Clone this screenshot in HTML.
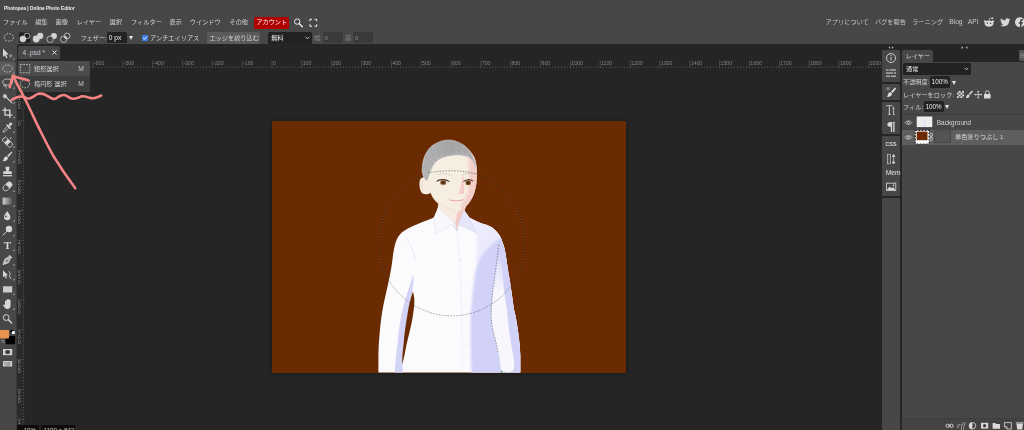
<!DOCTYPE html>
<html lang="ja">
<head>
<meta charset="utf-8">
<title>Photopea | Online Photo Editor</title>
<style>
*{box-sizing:border-box;margin:0;padding:0}
html,body{width:1024px;height:430px;overflow:hidden;background:#252525}
body{position:relative;font-family:"Liberation Sans","Noto Sans CJK JP",sans-serif;font-size:6.2px;color:#d4d4d4;line-height:1}
.a{position:absolute}
.t{position:absolute;white-space:nowrap;line-height:8px;height:8px}
.top{left:0;top:0;width:1024px;height:44.4px;background:#474747}
.dk{background:#222;border-radius:1.5px}
.btn{background:#5a5a5a;border-radius:1.5px}
svg{position:absolute;overflow:visible}
</style>
</head>
<body>
<div id="app" style="position:absolute;left:0;top:0;width:1024px;height:430px;will-change:transform">
<!-- ===== top bars ===== -->
<div class="a top"></div>
<div class="a" style="left:0;top:44.4px;width:20px;height:4px;background:#474747"></div><div class="a" style="left:16.8px;top:44.4px;width:6px;height:6px;background:#252525;border-radius:2px 0 0 0"></div>
<div class="t" id="title" style="left:3.7px;top:4.1px;font-size:6.2px;font-weight:bold;color:#f2f2f2;transform-origin:0 50%;transform:scaleX(.775)">Photopea | Online Photo Editor</div>

<!-- menu -->
<div class="t" style="left:3px;top:17.8px">ファイル</div>
<div class="t" style="left:35.3px;top:17.8px">編集</div>
<div class="t" style="left:55.5px;top:17.8px">画像</div>
<div class="t" style="left:76.5px;top:17.8px">レイヤー</div>
<div class="t" style="left:109.5px;top:17.8px">選択</div>
<div class="t" style="left:131px;top:17.8px">フィルター</div>
<div class="t" style="left:169.6px;top:17.8px">表示</div>
<div class="t" style="left:189.8px;top:17.8px">ウインドウ</div>
<div class="t" style="left:229.5px;top:17.8px">その他</div>
<div class="a" style="left:253.6px;top:16.5px;width:35.6px;height:12.3px;background:#b00000;border-radius:1.6px"></div>
<div class="t" style="left:256.3px;top:17.8px;color:#fff">アカウント</div>

<!-- right menu -->
<div class="t" style="left:825.6px;top:17.8px;color:#c4c4c4">アプリについて</div>
<div class="t" style="left:875px;top:17.8px;color:#c4c4c4">バグを報告</div>
<div class="t" style="left:912.2px;top:17.8px;color:#c4c4c4">ラーニング</div>
<div class="t" style="left:949.2px;top:17.8px;color:#c8c8c8;font-size:6.7px">Blog</div>
<div class="t" style="left:968px;top:17.8px;color:#c8c8c8;font-size:6.4px">API</div>

<!-- options bar -->
<svg class="a" style="left:0;top:30px" width="80" height="14" viewBox="0 30 80 14">
 <ellipse cx="8.8" cy="37.4" rx="4.6" ry="3.8" fill="none" stroke="#d8d8d8" stroke-width=".8" stroke-dasharray="1.7 1.1"/>
 <rect x="19.1" y="32.2" width="11.2" height="10.6" rx="1.2" fill="#222"/>
 <circle cx="27" cy="35.9" r="2.9" fill="none" stroke="#d8d8d8" stroke-width=".7"/>
 <circle cx="22.9" cy="39" r="3.2" fill="#d2d2d2"/>
 <circle cx="40.2" cy="35.9" r="3.1" fill="#d2d2d2"/>
 <circle cx="36.2" cy="39" r="3.4" fill="#d2d2d2"/>
 <path d="M37 35.6 L40 38.8" stroke="#d2d2d2" stroke-width="3"/>
 <circle cx="53.9" cy="35.9" r="3" fill="#d2d2d2"/>
 <circle cx="50.1" cy="39.3" r="3.2" fill="#474747" stroke="#d8d8d8" stroke-width=".7"/>
 <circle cx="67.1" cy="35.9" r="2.9" fill="none" stroke="#d8d8d8" stroke-width=".7"/>
 <circle cx="63.7" cy="39.3" r="3.2" fill="none" stroke="#d8d8d8" stroke-width=".7"/>
 <path d="M64.4 36.4 L66.8 38.6" fill="none" stroke="#d8d8d8" stroke-width="1.8"/>
</svg>
<div class="t" style="left:80.4px;top:33.6px">フェザー:</div>
<div class="a dk" style="left:107.4px;top:31.6px;width:19.6px;height:11.8px"></div>
<div class="t" style="left:108.8px;top:33.6px;color:#eee;font-size:6.6px">0 px</div>
<div class="a" style="left:128.8px;top:35.5px;width:0;height:0;border-left:2.3px solid transparent;border-right:2.3px solid transparent;border-top:4.2px solid #e6e6e6"></div>
<div class="a" style="left:142px;top:34.8px;width:6px;height:6px;background:#3b7de9;border-radius:1px"></div>
<svg class="a" style="left:142px;top:34.8px" width="6" height="6" viewBox="0 0 6 6"><path d="M1.2 3.1 L2.5 4.4 L4.9 1.5" fill="none" stroke="#fff" stroke-width=".9"/></svg>
<div class="t" style="left:150px;top:33.6px">アンチエイリアス</div>
<div class="a btn" style="left:207px;top:31.6px;width:53.4px;height:12px"></div>
<div class="t" style="left:209.4px;top:33.6px">エッジを絞り込む</div>
<div class="a dk" style="left:268.3px;top:31.6px;width:43.3px;height:12px"></div>
<div class="t" style="left:271.2px;top:33.6px;color:#eee">無料</div>
<svg class="a" style="left:305px;top:35.5px" width="5" height="4" viewBox="0 0 5 4"><path d="M.6 .8 L2.4 2.8 L4.2 .8" fill="none" stroke="#e0e0e0" stroke-width=".8"/></svg>
<div class="t" style="left:314px;top:33.6px;color:#8a8a8a">幅:</div>
<div class="a" style="left:322.5px;top:31.6px;width:20px;height:11.6px;background:#3a3a3a;border-radius:1.5px"></div>
<div class="t" style="left:324.4px;top:33.6px;color:#8a8a8a">0</div>
<div class="t" style="left:345px;top:33.6px;color:#8a8a8a">高:</div>
<div class="a" style="left:353.4px;top:31.6px;width:20px;height:11.6px;background:#3a3a3a;border-radius:1.5px"></div>
<div class="t" style="left:355px;top:33.6px;color:#8a8a8a">0</div>

<!-- ===== left toolbar ===== -->
<div class="a" style="left:0;top:44px;width:16.8px;height:386px;background:#474747"></div>
<!-- TOOLS START -->
<svg class="a" style="left:0;top:0" width="17" height="430" viewBox="0 0 17 430" fill="none" stroke="none">
<path d="M0 61.63 H13.6 a1.6 1.6 0 0 1 1.6 1.6 V73.73 a1.6 1.6 0 0 1 -1.6 1.6 H0Z" fill="#5b5b5b"/>
<g transform="translate(0 53.80)"><path d="M3 -5.2 L3 3.2 L4.9 1.5 L6.3 4.5 L7.5 3.9 L6.1 1 L8.6 .8Z" fill="#d6d6d6"/><path d="M10.7 .6 V3.6 M9.2 2.1 H12.2" stroke="#b8b8b8" stroke-width=".7"/><path d="M10.7 -.1 L11.4 .8 H10Z M10.7 4.3 L11.4 3.4 H10Z M8.5 2.1 L9.4 1.4 V2.8Z M12.9 2.1 L12 1.4 V2.8Z" fill="#b8b8b8"/><path d="M14.6 3.6 L14.6 5.6 L12.6 5.6Z" fill="#a4a4a4"/></g>
<g transform="translate(0 68.53)"><ellipse cx="7.5" cy="0" rx="4.9" ry="3.5" stroke="#d6d6d6" stroke-width=".8" stroke-dasharray="1.7 1.1"/><path d="M14.6 3.6 L14.6 5.6 L12.6 5.6Z" fill="#a4a4a4"/></g>
<g transform="translate(0 83.26)"><ellipse cx="7.6" cy="-1.2" rx="4.9" ry="3" stroke="#d6d6d6" stroke-width=".8"/><path d="M4.6 1.2 C3.4 1.4 3.6 3.4 5 3.1 C6.4 2.7 5.4 .9 4.6 1.2 M5.4 2.9 C6.2 3.6 6.6 4.4 6.4 5.4" stroke="#d6d6d6" stroke-width=".8"/><path d="M14.6 3.6 L14.6 5.6 L12.6 5.6Z" fill="#a4a4a4"/></g>
<g transform="translate(0 97.99)"><path d="M5.6 -1.4 L11.8 4.6" stroke="#d6d6d6" stroke-width="1.2" stroke-linecap="round"/><path d="M4.8 -5 L5.4 -3 L7.4 -3.6 L6.2 -2 L7.6 -.6 L5.6 -.8 L4.8 1.2 L4.2 -.8 L2.2 -.4 L3.6 -2 L2.4 -3.6 L4.2 -3Z" fill="#d6d6d6"/><path d="M14.6 3.6 L14.6 5.6 L12.6 5.6Z" fill="#a4a4a4"/></g>
<g transform="translate(0 112.72)"><path d="M5 -5.2 V2.4 H12.4 M2.4 -2.6 H9.8 V5" stroke="#d6d6d6" stroke-width="1.3"/><path d="M14.6 3.6 L14.6 5.6 L12.6 5.6Z" fill="#a4a4a4"/></g>
<g transform="translate(0 127.45)"><path d="M3.2 4.6 L3.4 3 L7.6 -1.2 L9 .2 L4.8 4.4Z" stroke="#d6d6d6" stroke-width=".8"/><path d="M7 -2.4 L10.2 .8 M8.4 -1 L10.4 -3" stroke="#d6d6d6" stroke-width="1.5" stroke-linecap="round"/><circle cx="10.6" cy="-3.4" r="1.5" fill="#d6d6d6"/><path d="M14.6 3.6 L14.6 5.6 L12.6 5.6Z" fill="#a4a4a4"/></g>
<g transform="translate(0 142.18)"><g transform="rotate(45 7.5 0)"><rect x="2" y="-2.5" width="11" height="5" rx="1.3" stroke="#d6d6d6" stroke-width=".8"/><rect x="5.6" y="-2.5" width="3.8" height="5" fill="#d6d6d6"/></g><circle cx="10.6" cy="-4" r=".7" fill="#d6d6d6"/><circle cx="4" cy="-3.4" r=".5" fill="#d6d6d6"/><path d="M14.6 3.6 L14.6 5.6 L12.6 5.6Z" fill="#a4a4a4"/></g>
<g transform="translate(0 156.91)"><path d="M11.6 -5.4 L12.4 -4.6 L8.6 .2 L7.2 -1.2Z" fill="#d6d6d6"/><path d="M6.6 -.6 L8 .8 C8 3 6 4.6 2.6 4.4 C3.8 3.4 3.4 2.4 4 1.2 C4.6 .2 5.6 -.4 6.6 -.6Z" fill="#d6d6d6"/><path d="M14.6 3.6 L14.6 5.6 L12.6 5.6Z" fill="#a4a4a4"/></g>
<g transform="translate(0 171.64)"><path d="M5.6 -5 H9.4 V-3 L8.6 -.4 H11.8 V2.4 H3.2 V-.4 H6.4 L5.6 -3Z" fill="#d6d6d6"/><rect x="3" y="3.4" width="9" height="1.3" fill="#d6d6d6"/></g>
<g transform="translate(0 186.37)"><g transform="rotate(-45 7.5 0)"><rect x="2.3" y="-2.7" width="10.4" height="5.4" rx="2.7" stroke="#d6d6d6" stroke-width=".8"/><path d="M7.5 -2.7 H10 a2.7 2.7 0 0 1 0 5.4 H7.5Z" fill="#d6d6d6"/></g><path d="M14.6 3.6 L14.6 5.6 L12.6 5.6Z" fill="#a4a4a4"/></g>
<defs><linearGradient id="gr" x1="0" x2="1" y1="0" y2="0"><stop offset="0" stop-color="#cfcfcf"/><stop offset="1" stop-color="#5a5a5a"/></linearGradient></defs>
<g transform="translate(0 201.10)"><rect x="2.6" y="-3.5" width="9.3" height="7" fill="url(#gr)"/><path d="M14.6 3.6 L14.6 5.6 L12.6 5.6Z" fill="#a4a4a4"/></g>
<g transform="translate(0 215.83)"><path d="M7.2 -4.8 C8.4 -2.6 10.4 -1 10.4 1.2 A3.2 3.2 0 0 1 4 1.2 C4 -1 6 -2.6 7.2 -4.8Z" fill="#d6d6d6"/><circle cx="6" cy=".6" r=".9" fill="#474747"/><path d="M14.6 3.6 L14.6 5.6 L12.6 5.6Z" fill="#a4a4a4"/></g>
<g transform="translate(0 230.56)"><circle cx="9" cy="-1.6" r="3.2" fill="#d6d6d6"/><path d="M6.8 .8 L3 4.6" stroke="#d6d6d6" stroke-width="1" stroke-linecap="round"/><path d="M14.6 3.6 L14.6 5.6 L12.6 5.6Z" fill="#a4a4a4"/></g>
<g transform="translate(0 245.29)"><text x="7.5" y="3.9" font-family="Liberation Serif, serif" font-size="11.2" font-weight="bold" text-anchor="middle" fill="#d6d6d6">T</text><path d="M14.6 3.6 L14.6 5.6 L12.6 5.6Z" fill="#a4a4a4"/></g>
<g transform="translate(0 260.02)"><path d="M9.4 -5.2 L12.4 -2.2 L10.6 -1.2 L8.4 -3.4Z" fill="#d6d6d6"/><path d="M8 -3 L10.2 -.8 L8.4 2.8 L3 4.6 L4.8 -.8Z M3.4 4.2 L6.6 1" stroke="#d6d6d6" stroke-width=".8" fill="#d6d6d6" fill-opacity=".75"/><circle cx="6.9" cy=".7" r=".8" fill="#474747"/><path d="M14.6 3.6 L14.6 5.6 L12.6 5.6Z" fill="#a4a4a4"/></g>
<g transform="translate(0 274.75)"><path d="M3 -4.6 L3 2.6 L4.7 1.2 L5.9 3.8 L7 3.3 L5.8 .8 L8 .6Z" fill="#d6d6d6"/><path d="M8.4 -3.4 C10.4 -2.6 10.4 0 9.4 1.6 M9.4 1.6 L11 4.4" stroke="#d6d6d6" stroke-width=".8"/><path d="M14.6 3.6 L14.6 5.6 L12.6 5.6Z" fill="#a4a4a4"/></g>
<g transform="translate(0 289.48)"><rect x="3" y="-3.2" width="9.2" height="6.2" fill="#cdcdcd"/><path d="M14.6 3.6 L14.6 5.6 L12.6 5.6Z" fill="#a4a4a4"/></g>
<g transform="translate(0 304.21)"><path d="M5 1 V-3 a.7 .7 0 0 1 1.4 0 V-4.2 a.7 .7 0 0 1 1.4 0 V-4.6 a.7 .7 0 0 1 1.4 0 V-3.8 a.7 .7 0 0 1 1.4 0 V1.4 C10.6 3.4 9.6 4.8 7.6 4.8 C5.8 4.8 5 3.8 3.2 1.2 C2.8 .4 3.8 -.2 4.4 .6Z" fill="#d6d6d6"/><path d="M14.6 3.6 L14.6 5.6 L12.6 5.6Z" fill="#a4a4a4"/></g>
<g transform="translate(0 318.94)"><circle cx="6.2" cy="-1.4" r="2.9" stroke="#d6d6d6" stroke-width="1"/><path d="M8.4 .8 L11.6 4" stroke="#d6d6d6" stroke-width="1.5" stroke-linecap="round"/></g>
<rect x="5.6" y="336" width="9.6" height="8.2" rx=".6" fill="#000"/>
<rect x="0" y="329.9" width="9" height="8.7" rx=".8" fill="#e8944f"/>
<rect x="10.6" y="329.8" width="2.6" height="2.6" fill="#000"/><rect x="12" y="331.2" width="2.8" height="2.8" fill="#fff"/>
<path d="M1.2 340.6 H3.6 V343 M1.2 340.6 l.9 -.8 M1.2 340.6 l.9 .8 M3.6 343 l-.8 -.9 M3.6 343 l.8 -.9" stroke="#bbb" stroke-width=".5"/>
<rect x="3" y="349" width="9.2" height="6.2" fill="#d0d0d0"/><ellipse cx="7.6" cy="352.1" rx="2.5" ry="2" fill="#3a3a3a"/>
<rect x="3" y="361" width="9.2" height="5.4" rx=".6" fill="#d0d0d0"/><path d="M4.2 362.5 H11 M4.2 363.8 H11" stroke="#474747" stroke-width=".6" stroke-dasharray=".8 .5"/><path d="M5.4 365.1 H9.8" stroke="#474747" stroke-width=".6"/>
</svg>
<!-- TOOLS END -->
<!-- rulers -->
<svg class="a" style="left:0;top:0" width="1024" height="430" viewBox="0 0 1024 430" font-family="Liberation Sans, sans-serif" font-size="5.2" fill="#858585">
<rect x="16.6" y="59.4" width="7.2" height="370.6" fill="#2a2a2a"/>
<line x1="24.4" y1="67.2" x2="881.3" y2="67.2" stroke="#6a6a6a" stroke-width="1" stroke-dasharray="0.8 2.184" stroke-dashoffset="-2.512"/>
<line x1="33.3" y1="60.5" x2="33.3" y2="67.8" stroke="#505050" stroke-width=".8"/><text x="34.2" y="65.1">-800</text>
<line x1="63.1" y1="60.5" x2="63.1" y2="67.8" stroke="#505050" stroke-width=".8"/><text x="64.0" y="65.1">-700</text>
<line x1="93.0" y1="60.5" x2="93.0" y2="67.8" stroke="#505050" stroke-width=".8"/><text x="93.9" y="65.1">-600</text>
<line x1="122.8" y1="60.5" x2="122.8" y2="67.8" stroke="#505050" stroke-width=".8"/><text x="123.7" y="65.1">-500</text>
<line x1="152.6" y1="60.5" x2="152.6" y2="67.8" stroke="#505050" stroke-width=".8"/><text x="153.5" y="65.1">-400</text>
<line x1="182.5" y1="60.5" x2="182.5" y2="67.8" stroke="#505050" stroke-width=".8"/><text x="183.4" y="65.1">-300</text>
<line x1="212.3" y1="60.5" x2="212.3" y2="67.8" stroke="#505050" stroke-width=".8"/><text x="213.2" y="65.1">-200</text>
<line x1="242.2" y1="60.5" x2="242.2" y2="67.8" stroke="#505050" stroke-width=".8"/><text x="243.1" y="65.1">-100</text>
<line x1="272.0" y1="60.5" x2="272.0" y2="67.8" stroke="#505050" stroke-width=".8"/><text x="272.9" y="65.1">0</text>
<line x1="301.8" y1="60.5" x2="301.8" y2="67.8" stroke="#505050" stroke-width=".8"/><text x="302.7" y="65.1">100</text>
<line x1="331.7" y1="60.5" x2="331.7" y2="67.8" stroke="#505050" stroke-width=".8"/><text x="332.6" y="65.1">200</text>
<line x1="361.5" y1="60.5" x2="361.5" y2="67.8" stroke="#505050" stroke-width=".8"/><text x="362.4" y="65.1">300</text>
<line x1="391.4" y1="60.5" x2="391.4" y2="67.8" stroke="#505050" stroke-width=".8"/><text x="392.3" y="65.1">400</text>
<line x1="421.2" y1="60.5" x2="421.2" y2="67.8" stroke="#505050" stroke-width=".8"/><text x="422.1" y="65.1">500</text>
<line x1="451.0" y1="60.5" x2="451.0" y2="67.8" stroke="#505050" stroke-width=".8"/><text x="451.9" y="65.1">600</text>
<line x1="480.9" y1="60.5" x2="480.9" y2="67.8" stroke="#505050" stroke-width=".8"/><text x="481.8" y="65.1">700</text>
<line x1="510.7" y1="60.5" x2="510.7" y2="67.8" stroke="#505050" stroke-width=".8"/><text x="511.6" y="65.1">800</text>
<line x1="540.6" y1="60.5" x2="540.6" y2="67.8" stroke="#505050" stroke-width=".8"/><text x="541.5" y="65.1">900</text>
<line x1="570.4" y1="60.5" x2="570.4" y2="67.8" stroke="#505050" stroke-width=".8"/><text x="571.3" y="65.1">1000</text>
<line x1="600.2" y1="60.5" x2="600.2" y2="67.8" stroke="#505050" stroke-width=".8"/><text x="601.1" y="65.1">1100</text>
<line x1="630.1" y1="60.5" x2="630.1" y2="67.8" stroke="#505050" stroke-width=".8"/><text x="631.0" y="65.1">1200</text>
<line x1="659.9" y1="60.5" x2="659.9" y2="67.8" stroke="#505050" stroke-width=".8"/><text x="660.8" y="65.1">1300</text>
<line x1="689.8" y1="60.5" x2="689.8" y2="67.8" stroke="#505050" stroke-width=".8"/><text x="690.7" y="65.1">1400</text>
<line x1="719.6" y1="60.5" x2="719.6" y2="67.8" stroke="#505050" stroke-width=".8"/><text x="720.5" y="65.1">1500</text>
<line x1="749.4" y1="60.5" x2="749.4" y2="67.8" stroke="#505050" stroke-width=".8"/><text x="750.3" y="65.1">1600</text>
<line x1="779.3" y1="60.5" x2="779.3" y2="67.8" stroke="#505050" stroke-width=".8"/><text x="780.2" y="65.1">1700</text>
<line x1="809.1" y1="60.5" x2="809.1" y2="67.8" stroke="#505050" stroke-width=".8"/><text x="810.0" y="65.1">1800</text>
<line x1="839.0" y1="60.5" x2="839.0" y2="67.8" stroke="#505050" stroke-width=".8"/><text x="839.9" y="65.1">1900</text>
<line x1="868.8" y1="60.5" x2="868.8" y2="67.8" stroke="#505050" stroke-width=".8"/><text x="869.7" y="65.1">2000</text>
<line x1="23.7" y1="67.8" x2="23.7" y2="430" stroke="#6a6a6a" stroke-width="1" stroke-dasharray="0.8 2.184" stroke-dashoffset="-2.072"/>
<line x1="17" y1="91.2" x2="24.2" y2="91.2" stroke="#505050" stroke-width=".8"/><text x="19.3" y="95.8" text-anchor="middle">-</text><text x="19.3" y="100.3" text-anchor="middle">1</text><text x="19.3" y="104.8" text-anchor="middle">0</text><text x="19.3" y="109.3" text-anchor="middle">0</text>
<line x1="17" y1="121.0" x2="24.2" y2="121.0" stroke="#505050" stroke-width=".8"/><text x="19.3" y="125.6" text-anchor="middle">0</text>
<line x1="17" y1="150.8" x2="24.2" y2="150.8" stroke="#505050" stroke-width=".8"/><text x="19.3" y="155.4" text-anchor="middle">1</text><text x="19.3" y="159.9" text-anchor="middle">0</text><text x="19.3" y="164.4" text-anchor="middle">0</text>
<line x1="17" y1="180.7" x2="24.2" y2="180.7" stroke="#505050" stroke-width=".8"/><text x="19.3" y="185.3" text-anchor="middle">2</text><text x="19.3" y="189.8" text-anchor="middle">0</text><text x="19.3" y="194.3" text-anchor="middle">0</text>
<line x1="17" y1="210.5" x2="24.2" y2="210.5" stroke="#505050" stroke-width=".8"/><text x="19.3" y="215.1" text-anchor="middle">3</text><text x="19.3" y="219.6" text-anchor="middle">0</text><text x="19.3" y="224.1" text-anchor="middle">0</text>
<line x1="17" y1="240.4" x2="24.2" y2="240.4" stroke="#505050" stroke-width=".8"/><text x="19.3" y="245.0" text-anchor="middle">4</text><text x="19.3" y="249.5" text-anchor="middle">0</text><text x="19.3" y="254.0" text-anchor="middle">0</text>
<line x1="17" y1="270.2" x2="24.2" y2="270.2" stroke="#505050" stroke-width=".8"/><text x="19.3" y="274.8" text-anchor="middle">5</text><text x="19.3" y="279.3" text-anchor="middle">0</text><text x="19.3" y="283.8" text-anchor="middle">0</text>
<line x1="17" y1="300.0" x2="24.2" y2="300.0" stroke="#505050" stroke-width=".8"/><text x="19.3" y="304.6" text-anchor="middle">6</text><text x="19.3" y="309.1" text-anchor="middle">0</text><text x="19.3" y="313.6" text-anchor="middle">0</text>
<line x1="17" y1="329.9" x2="24.2" y2="329.9" stroke="#505050" stroke-width=".8"/><text x="19.3" y="334.5" text-anchor="middle">7</text><text x="19.3" y="339.0" text-anchor="middle">0</text><text x="19.3" y="343.5" text-anchor="middle">0</text>
<line x1="17" y1="359.7" x2="24.2" y2="359.7" stroke="#505050" stroke-width=".8"/><text x="19.3" y="364.3" text-anchor="middle">8</text><text x="19.3" y="368.8" text-anchor="middle">0</text><text x="19.3" y="373.3" text-anchor="middle">0</text>
<line x1="17" y1="389.6" x2="24.2" y2="389.6" stroke="#505050" stroke-width=".8"/><text x="19.3" y="394.2" text-anchor="middle">9</text><text x="19.3" y="398.7" text-anchor="middle">0</text><text x="19.3" y="403.2" text-anchor="middle">0</text>
<line x1="17" y1="419.4" x2="24.2" y2="419.4" stroke="#505050" stroke-width=".8"/><text x="19.3" y="424.0" text-anchor="middle">1</text><text x="19.3" y="428.5" text-anchor="middle">0</text><text x="19.3" y="433.0" text-anchor="middle">0</text><text x="19.3" y="437.5" text-anchor="middle">0</text>
</svg>

<!-- tab -->
<div class="a" style="left:18px;top:46.3px;width:42px;height:12.5px;background:#474747;border-radius:1.6px"></div>
<div class="t" style="left:22.6px;top:48.5px;color:#c4ccd4;font-size:6.6px">4 .psd *</div>
<svg class="a" style="left:51.6px;top:50.2px" width="5" height="5" viewBox="0 0 5 5"><path d="M.5 .5 L4.5 4.5 M4.5 .5 L.5 4.5" stroke="#f0f0f0" stroke-width=".9" fill="none"/></svg>

<!-- FLY START -->
<div class="a" style="left:18px;top:61px;width:72.2px;height:15px;background:#4b4b4b"></div>
<div class="a" style="left:18px;top:76px;width:72.2px;height:15.6px;background:#3d3d3d"></div>
<svg class="a" style="left:18px;top:61px" width="73" height="31" viewBox="18 61 73 31" fill="none">
 <rect x="20.3" y="64.6" width="9.6" height="8.2" stroke="#d8d8d8" stroke-width=".8" stroke-dasharray="1.8 1.1"/>
 <ellipse cx="25" cy="83.8" rx="4.7" ry="4" stroke="#d8d8d8" stroke-width=".8" stroke-dasharray="1.7 1.1"/>
</svg>
<div class="t" style="left:34px;top:64.6px;color:#d4d4d4">矩形選択</div>
<div class="t" style="left:78.3px;top:64.6px;color:#c8c8c8;font-size:6.7px">M</div>
<div class="t" style="left:34px;top:79.6px;color:#d4d4d4">楕円形 選択</div>
<div class="t" style="left:78.3px;top:79.6px;color:#c8c8c8;font-size:6.7px">M</div>
<!-- annotation scribble -->
<svg class="a" style="left:0;top:0" width="1024" height="430" viewBox="0 0 1024 430" fill="none" stroke="#f48383" stroke-width="2.6" stroke-linecap="round" stroke-linejoin="round">
 <path d="M9.7 87.1 C9.8 86.7 10.1 85.8 10.4 84.7 C10.7 83.6 11.2 81.7 11.5 80.5 C11.8 79.3 12.2 78.4 12.4 77.6 C12.6 76.8 12.8 76.1 12.9 75.8"/>
 <path d="M12.9 75.8 C13.3 76.0 14.5 76.4 15.4 76.7 C16.3 77.0 17.1 77.3 18.5 77.7 C19.9 78.1 22.3 78.6 24.0 79.1 C25.7 79.6 27.8 80.3 28.6 80.5"/>
 <path d="M13.2 76.3 C13.6 77.1 14.8 79.5 15.7 81.2 C16.6 82.9 17.5 84.9 18.5 86.7 C19.5 88.5 20.6 90.4 21.6 92.3 C22.6 94.2 23.6 96.3 24.4 97.9 C25.2 99.5 25.2 99.5 26.4 101.8 C27.5 104.1 29.4 108.0 31.3 112.0 C33.2 116.0 36.0 122.1 37.9 125.9 C39.8 129.7 40.9 132.0 42.4 135.0 C43.9 138.0 45.7 141.5 47.0 144.0 C48.3 146.5 49.1 148.2 50.2 150.2 C51.3 152.2 52.0 153.6 53.4 156.0 C54.8 158.4 57.1 161.6 58.9 164.4 C60.7 167.2 62.4 170.0 64.3 172.8 C66.2 175.6 68.4 178.5 70.2 181.1 C72.0 183.7 74.4 187.0 75.2 188.2"/>
 <path d="M11.7 99.9 C12.3 99.6 13.9 98.6 15.3 98.0 C16.7 97.4 18.7 96.7 20.2 96.5 C21.7 96.3 22.9 96.7 24.1 97.0 C25.3 97.3 26.5 98.3 27.5 98.5 C28.5 98.7 28.9 98.6 30.0 98.2 C31.1 97.8 32.7 97.0 33.9 96.3 C35.1 95.6 36.2 94.5 37.3 94.1 C38.3 93.6 39.1 93.6 40.2 93.6 C41.3 93.6 42.8 93.8 44.1 94.3 C45.4 94.8 46.7 95.6 48.0 96.3 C49.3 97.0 50.9 98.1 52.0 98.5 C53.1 98.9 53.6 99.0 54.4 98.9 C55.2 98.8 55.7 98.6 56.6 98.1 C57.5 97.6 58.7 96.5 59.9 96.0 C61.1 95.5 62.7 95.0 63.8 95.0 C64.9 95.0 65.6 95.5 66.7 96.0 C67.8 96.5 69.0 97.5 70.2 98.0 C71.4 98.5 72.8 98.8 74.1 98.7 C75.4 98.7 76.7 98.1 78.0 97.7 C79.3 97.3 80.7 96.5 81.9 96.3 C83.1 96.1 84.1 96.3 85.3 96.5 C86.5 96.7 87.9 97.4 89.2 97.7 C90.5 98.0 91.8 98.3 93.1 98.2 C94.4 98.1 95.7 97.7 97.0 97.2 C98.3 96.8 100.5 95.8 101.2 95.5"/>
</svg>
<!-- FLY END -->
<!-- canvas document -->
<div class="a" id="doc" style="left:271.8px;top:121px;width:354.6px;height:251.7px;background:#6a2b03;box-shadow:0 0 3px 1px #1c1c1c"></div>

<!-- FIG START -->
<svg class="a" style="left:0;top:0" width="1024" height="430" viewBox="0 0 1024 430" fill="none">
<defs>
 <clipPath id="docclip"><rect x="271.8" y="121" width="354.6" height="251.4"/></clipPath>
 <filter id="b1" x="-10%" y="-10%" width="120%" height="120%"><feGaussianBlur stdDeviation="0.45"/></filter>
 <filter id="b2" x="-20%" y="-20%" width="140%" height="140%"><feGaussianBlur stdDeviation="1.6"/></filter>
 <filter id="b4" x="-20%" y="-20%" width="140%" height="140%"><feGaussianBlur stdDeviation="1.3"/></filter>
 <filter id="b3" x="-20%" y="-20%" width="140%" height="140%"><feGaussianBlur stdDeviation="0.9"/></filter>
 <clipPath id="bodyclip"><path id="bodyp" d="M438 207.7 L433.8 217.5 C429 219.6 425 221 421.9 222.3 C416 224.6 412 226.6 407.9 228.6 C404.4 230.4 401.6 232.4 399.5 234.9 C397.4 237.6 396.2 240.4 395.4 243.3 C394.4 246.6 393.8 249.8 393.3 253 C392.6 258 392.2 262.6 391.4 267.2 C390.4 273 389 279.6 387.7 285.8 C386.4 292 385.4 296 384.5 300 C383.2 306 382 312.6 381.2 318.6 C380.4 324.6 379.8 331 379.3 337.2 C378.8 343.6 378.4 349.6 378.4 355.8 L378.4 373 L520.3 373 L520.3 355.8 C520.2 349.6 519.6 343.4 518.8 337.2 C518 330.6 517 324.6 516 318.6 C515.2 313.6 514.2 310 514 310 C513 302 511.6 293 510.5 284.9 C509.6 279 508.6 273.6 507.7 268.2 C506.8 262 506 256 505.2 251.7 C504.6 248 503.6 244.6 502.4 241.9 C501.4 238.6 500 235.8 498.2 233.5 C496.4 231 494.4 229 491.9 227.2 C488.4 225.4 484.6 224.2 480.7 223 C477 221.6 473 219.6 469.5 217.5 L464 209.8 L456.5 222 Z"/></clipPath>
 <clipPath id="faceclip"><path d="M427.6 160 C429 150 440 143 450 143 C462 143 474 150 476.2 164 C477 170 476.9 178 476.3 184 C475.6 188.6 474.6 192 473.5 195 C471.6 199.6 469 203.4 466 206.3 C463 209 460.4 211 457.5 212 C450.6 210.6 443.6 207.6 438 203.5 C434.6 200.6 432.4 197.4 431 193.7 C429.4 188.6 428.4 184 428 178.4 Z"/></clipPath>
 <linearGradient id="wedgeg" gradientUnits="userSpaceOnUse" x1="0" y1="258" x2="0" y2="292"><stop offset="0" stop-color="#f8f7fc" stop-opacity=".25"/><stop offset="1" stop-color="#f8f7fc" stop-opacity="1"/></linearGradient>
 <linearGradient id="hairg" x1="0" y1="0" x2="1" y2="0"><stop offset="0" stop-color="#b4b4b4"/><stop offset=".5" stop-color="#a6a6a6"/><stop offset="1" stop-color="#b0aeae"/></linearGradient>
</defs>
<g clip-path="url(#docclip)">
 <g filter="url(#b1)">
 <!-- neck -->
 <path d="M438.6 202 L437.4 209.4 L452.6 224.4 L456.8 231 L458.6 224.4 L464.6 210 L466.4 204 Z" fill="#f6ecdf"/>
 <path d="M457.5 211.6 L466.6 205 L464.6 210.4 L459.6 222 L456.8 231 L455.2 224 Z" fill="#f2c9c3"/>
 <!-- ear -->
 <path d="M430 178 C426 176.4 421.4 176.6 420 180 C418.8 184 419.6 189.6 421.6 192.6 C423.4 195 427 194.6 431 193 Z" fill="#f6ecdf"/>
 <path d="M422.2 180.6 C421.2 184 421.6 188 423.4 190.8" stroke="#ecd2c4" stroke-width=".7"/>
 <!-- face -->
 <path d="M427.6 160 C429 150 440 143 450 143 C462 143 474 150 476.2 164 C477 170 476.9 178 476.3 184 C475.6 188.6 474.6 192 473.5 195 C471.6 199.6 469 203.4 466 206.3 C463 209 460.4 211 457.5 212 C450.6 210.6 443.6 207.6 438 203.5 C434.6 200.6 432.4 197.4 431 193.7 C429.4 188.6 428.4 184 428 178.4 Z" fill="#f7eee2"/>
 <g clip-path="url(#faceclip)">
  <path d="M468 154 L480 158 L480 198 L466 212 L460 207 C464 201 467.6 195 468.6 187 C469.6 177 469 166 468 154Z" fill="#f4cfc8" filter="url(#b3)"/>
  <path d="M462.4 176.6 C461.6 183 460.2 189 458.8 193.6 C460.4 194.6 462.6 194.4 464 193.4 C464.6 188 464.4 182 463.6 176.6Z" fill="#f4cdc6" filter="url(#b1)"/>
  <path d="M431 193.7 C434 200 440 206 457.5 212" stroke="#efd9cb" stroke-width=".8"/>
 </g>
 <!-- eyes -->
 <path d="M436.6 181.4 C439 179.2 445.4 178.8 449.4 181.6" stroke="#4a3020" stroke-width="1.1"/>
 <ellipse cx="443.2" cy="182.8" rx="3" ry="2.5" fill="#7d4e24"/><circle cx="443.2" cy="182.8" r="1.2" fill="#3a2210"/>
 <path d="M438.4 183.6 C440.4 184.6 446 184.8 448 183.6" stroke="#e4d6cc" stroke-width=".5"/>
 <path d="M463.6 181.6 C466 179.2 470.6 179 473 181.2" stroke="#4a3020" stroke-width="1.1"/>
 <ellipse cx="468.2" cy="182.7" rx="2.7" ry="2.5" fill="#7d4e24"/><circle cx="468.2" cy="182.7" r="1.2" fill="#3a2210"/>
 <!-- brows -->
 <path d="M438.6 174.4 C442 173.2 447.4 173.4 451.4 175.2" stroke="#c9c4be" stroke-width=".7"/>
 <path d="M461.6 175.2 C464.6 173.4 469.6 173 473.6 174.2" stroke="#c9c4be" stroke-width=".7"/>
 <!-- mouth -->
 <path d="M449.2 199.8 C453 201.2 459.6 201.2 463.8 199.6" stroke="#e9a3a0" stroke-width="1"/>
 <!-- hair -->
 <path d="M423.3 176.1 C422 172 421.8 170 422.3 167.7 C422.4 164 423 161 424 157.9 C425.4 154 427.2 151 429.5 148.2 C432 145.6 434.8 143.8 437.9 142.6 C441 141 444.4 140.1 447.7 140.1 C451 139.8 454.4 140.6 457.5 141.9 C460.6 143 463.4 144.6 465.8 146.8 C468 148.8 469.9 151.1 471.4 153.7 C473 156.4 474.2 159.2 474.9 162.1 C475.6 164 476 166 475.9 168.4 C475 165.4 473.8 162.6 472.1 160 C471 158.6 470 157.8 468.6 157.2 C465.6 156.2 462.4 155.4 458.9 155.1 C456 154.9 453.4 155.2 450.5 155.8 C447.6 156.2 444.8 156.8 442.1 157.9 C439.4 159 437 160.6 435.1 162.8 C433.2 165 431.9 167.6 430.9 170.5 C429.9 173 429 175.6 428.2 178.2 C427.8 179.4 427.4 180.4 426.8 181 C425.4 179.8 424.2 178 423.3 176.1Z" fill="url(#hairg)" stroke="#d0d0d0" stroke-width=".6"/>
 <g stroke="#e2e0de" stroke-width=".45" opacity=".75">
  <path d="M437.4 160.2 L435.8 157.4"/><path d="M439.8 158.8 L438.6 155.8"/><path d="M442.4 157.8 L441.6 154.6"/><path d="M445.2 157 L444.6 153.8"/><path d="M448 156.4 L447.8 153"/><path d="M450.8 155.8 L450.8 152.6"/><path d="M453.6 155.4 L454 152.2"/><path d="M456.4 155.2 L457 152"/><path d="M459.2 155.2 L460.2 152.2"/><path d="M462 155.6 L463.2 152.8"/><path d="M464.8 156.2 L466.2 153.6"/><path d="M467.4 157 L468.8 154.6"/>
  <path d="M434.8 163.2 L432.6 160.8"/><path d="M432.8 166.2 L430.4 164.4"/><path d="M431.4 169.6 L428.8 168.2"/><path d="M430.2 173 L427.6 172"/>
 </g>
 <g stroke="#9a9a9a" stroke-width=".5" opacity=".8">
  <path d="M436 161.4 C433 157 431 153 430.6 149"/><path d="M440 158.6 C438 154 437.4 149 438 144.6"/><path d="M445.6 156.8 C444.6 152 445 147 446.4 142.4"/>
  <path d="M451.6 155.6 C451.6 151 452.6 146.6 454.6 142.6"/><path d="M457.6 155 C458.4 151 460 147.4 462.4 144.4"/><path d="M463.6 156 C464.6 153 466.4 150.4 468.6 148.6"/>
  <path d="M432.4 167 C429.4 164 427.4 160 426.4 155.6"/><path d="M430 173 C427.2 171 425.4 168 424.2 164.4"/>
 </g>
 <!-- shirt -->
 <path d="M438 207.7 L433.8 217.5 C429 219.6 425 221 421.9 222.3 C416 224.6 412 226.6 407.9 228.6 C404.4 230.4 401.6 232.4 399.5 234.9 C397.4 237.6 396.2 240.4 395.4 243.3 C394.4 246.6 393.8 249.8 393.3 253 C392.6 258 392.2 262.6 391.4 267.2 C390.4 273 389 279.6 387.7 285.8 C386.4 292 385.4 296 384.5 300 C383.2 306 382 312.6 381.2 318.6 C380.4 324.6 379.8 331 379.3 337.2 C378.8 343.6 378.4 349.6 378.4 355.8 L378.4 373 L520.3 373 L520.3 355.8 C520.2 349.6 519.6 343.4 518.8 337.2 C518 330.6 517 324.6 516 318.6 C515.2 313.6 514.2 310 514 310 C513 302 511.6 293 510.5 284.9 C509.6 279 508.6 273.6 507.7 268.2 C506.8 262 506 256 505.2 251.7 C504.6 248 503.6 244.6 502.4 241.9 C501.4 238.6 500 235.8 498.2 233.5 C496.4 231 494.4 229 491.9 227.2 C488.4 225.4 484.6 224.2 480.7 223 C477 221.6 473 219.6 469.5 217.5 L464 209.8 L458.4 224.4 L456.8 231 L452.6 224.4 Z" fill="#fbfafd"/>
 </g>
 <g clip-path="url(#bodyclip)">
  <!-- body shadow (right) -->
  <path d="M468 212 L472 221 C475 228 477 234 477 242 C477 256 476 268 474.4 282 C473 296 471.2 306 470.7 318.6 C470.4 336 470.8 354 471.4 374 L524 374 L524 300 L510 240 L494 222 L470 208Z" fill="#ebebfc" filter="url(#b2)"/>
  <path d="M503 236 C496 240.6 488 247 482 255.4 C478 261.6 475.6 270 474.4 280 C473 294 471.4 306 470.8 318.6 C470.6 336 471 354 471.6 374 L524 374 L524 300 L510 246 L505 234Z" fill="#d2d2f8" filter="url(#b4)"/>
  <!-- white wedge on right arm -->
  <path d="M498.8 257 C500.4 262 501.4 266 502.1 271 C503 278 503.6 285 504.2 291.9 C505 298 506 304 507 310 L507.7 318.6 C508.4 325 509.2 331 509.9 337.2 C511 343.6 512.4 350 513.3 355.8 C514 360 514.4 364 514.2 368 C513 371.4 510.6 372.4 508 372.2 C505 372.2 502.6 371.6 501.2 370 C500.2 365 499.8 360 499.3 355.8 L498 352.1 C497.2 347 496 342.6 494.7 337.2 C493 331 491.8 325 491.3 318.6 C491 314 491.2 310 491.6 305.8 C492 297 492.8 291 493.7 284.9 C494.4 279 495.4 272 496.5 264Z" fill="url(#wedgeg)" filter="url(#b1)"/>
  <!-- left arm lavender strip -->
  <path d="M413.2 274.6 C411.4 281 409 288 406.8 294.4 C404.4 302 402.2 310 400.7 318.8 C399.2 327 398.2 335 397.6 343.2 C396.6 351 395.6 359 395.1 367.6 L395 374 L403 374 L402.4 364 C402.6 360 403 352 404.4 343.2 C405.4 335 406.6 327 408 318.8 C409 310 410.4 302 411.7 294.4 C412.4 291 413.4 284 413.6 280Z" fill="#d3d3f7" filter="url(#b1)"/>
  <!-- placket, seams, buttons -->
  <path d="M457 231 C459 250 461 280 461.6 310 C462 330 462.2 350 462.2 373" stroke="#ecebf3" stroke-width=".6"/>
  <path d="M406.3 237.4 C410 244 413.6 252 415.6 259.8" stroke="#e4e3ee" stroke-width=".6"/>
  <circle cx="458.6" cy="238" r=".9" fill="#ebeaf3"/><circle cx="460.6" cy="260" r=".9" fill="#ebeaf3"/><circle cx="462" cy="286" r=".9" fill="#ebeaf3"/><circle cx="465.8" cy="344.7" r=".9" fill="#ebeaf3"/>
  <!-- collar -->
  <path d="M438 207.7 L433.8 217.5 L435.8 233.5 L452.6 224.4 L456.8 231 L455 223 Z" fill="#f8f7fc" stroke="#dcdbe8" stroke-width=".5"/>
  <path d="M464 209.8 L469.5 218.2 L476.5 232.8 L458.4 224.4 L456.8 231 L459 222 Z" fill="#e6e6fb" stroke="#d4d3e6" stroke-width=".5"/>
 </g>
 <!-- brown gap between left arm and body -->
 <path d="M412.9 291.6 C413.8 295 414.4 298 414.3 300 C414.4 302 414.3 304.4 414.1 306.6 C413.6 311 413 315 412.4 318.8 C411.6 323 410.8 327 409.8 331 C408.8 335 407.8 339 406.8 343.2 C406 347 405.2 351 404.4 355.4 C403.8 358 403 361.6 402.4 364.4 C402.2 361.4 402.2 358 402.4 355.4 C402.8 351 403.2 347 403.7 343.2 C404 339 404.4 335 404.9 331 C405.4 327 406 323 406.8 318.8 C407.4 315 408 311 408.8 306.6 C410 301 411.4 296 412.9 291.6Z" fill="#6a2b03" filter="url(#b1)"/>
 <circle cx="501.6" cy="372" r=".9" fill="#2a9a2a"/>
 <!-- selection (marching ants) -->
 <g stroke="#1c140e" stroke-width=".75" stroke-dasharray="1.6 1.3" opacity=".8">
  <path d="M422 176 A73.3 73.3 0 0 0 388.2 279"/>
  <path d="M388.2 279 A73.3 73.3 0 0 0 511.4 285.2" stroke-width=".55" stroke="#333"/>
  <path d="M511.4 285.2 A73.3 73.3 0 0 0 476.4 174"/>
  <path d="M428 172.8 C436 171.4 444 170.8 451.7 170.8 C460 170.8 468 171.6 476.4 174" stroke-width=".6" stroke="#333"/>
  <path stroke-width=".55" stroke="#333" d="M498.9 244.7 C498 252 497.2 258 496.5 264 C495.4 272 494.4 279 493.7 284.9 C492.8 291 492 297 491.6 305.8 C491.2 310 491 314 491.3 318.6 C491.8 325 493 331 494.7 337.2 C496 342.6 497.2 347 498 352.1"/>
 </g>
 <g stroke="#e8d8c8" stroke-width=".7" stroke-dasharray="1.3 1.6" stroke-dashoffset="1.45" opacity=".33">
  <path d="M422 176 A73.3 73.3 0 0 0 388.2 279"/>
  <path d="M511.4 285.2 A73.3 73.3 0 0 0 476.4 174"/>
 </g>
</g>
</svg>
<!-- FIG END -->
<!-- status -->
<div class="a" style="left:16.8px;top:424.6px;width:22.4px;height:6px;background:#0c0c0c"></div>
<div class="a" style="left:41px;top:424.6px;width:34px;height:6px;background:#0c0c0c"></div>
<div class="t" style="left:23.5px;top:426.4px;color:#cfcfcf">19%</div>
<div class="t" style="left:43.6px;top:426.4px;color:#cfcfcf">1190 × 842</div>

<!-- ===== right side ===== -->
<div class="a" style="left:881.6px;top:49.7px;width:18.4px;height:32.3px;background:#474747;border-radius:1px"></div>
<div class="a" style="left:881.6px;top:83.8px;width:18.4px;height:16.4px;background:#474747;border-radius:1px"></div>
<div class="a" style="left:881.6px;top:102.3px;width:18.4px;height:31.5px;background:#474747;border-radius:1px"></div>
<div class="a" style="left:881.6px;top:136px;width:18.4px;height:59.5px;background:#474747;border-radius:1px"></div>
<div class="a" style="left:881.6px;top:197.6px;width:18.4px;height:233px;background:#474747;border-radius:1px"></div>

<!-- layers panel -->
<div class="a" style="left:902px;top:50px;width:31px;height:13px;background:#474747;border-radius:1.6px 1.6px 0 0"></div>
<div class="a" style="left:902px;top:61.6px;width:122px;height:369px;background:#474747"></div>
<div class="a" style="left:1018.5px;top:50.3px;width:6px;height:10.4px;background:#555;border-radius:1.5px 0 0 1.5px"></div>
<div class="t" style="left:905.6px;top:51.9px">レイヤー</div>
<div class="a dk" style="left:903px;top:63.2px;width:68px;height:11.8px"></div>
<div class="t" style="left:906px;top:65.2px;color:#eee">通常</div>
<svg class="a" style="left:963.6px;top:67.3px" width="5" height="4" viewBox="0 0 5 4"><path d="M.6 .8 L2.4 2.8 L4.2 .8" fill="none" stroke="#e0e0e0" stroke-width=".8"/></svg>
<div class="t" style="left:903px;top:78.3px">不透明度:</div>
<div class="a dk" style="left:930px;top:76.4px;width:20px;height:11.2px"></div>
<div class="t" style="left:931.8px;top:78.2px;color:#eee;font-size:6.3px">100%</div>
<div class="a" style="left:951.6px;top:81px;width:0;height:0;border-left:2.3px solid transparent;border-right:2.3px solid transparent;border-top:4.2px solid #e6e6e6"></div>
<div class="t" style="left:903px;top:90.8px">レイヤーをロック:</div>
<div class="t" style="left:903px;top:103px">フィル:</div>
<div class="a dk" style="left:924px;top:101px;width:19.8px;height:11.4px"></div>
<div class="t" style="left:925.6px;top:102.9px;color:#eee;font-size:6.3px">100%</div>
<div class="a" style="left:945.3px;top:105.4px;width:0;height:0;border-left:2.3px solid transparent;border-right:2.3px solid transparent;border-top:4.2px solid #e6e6e6"></div>
<div class="a" style="left:902px;top:114px;width:122px;height:.7px;background:#3c3c3c"></div>
<!-- layer rows -->
<div class="a" style="left:902px;top:129.6px;width:122px;height:15.4px;background:#5e5e5e"></div>
<div class="t" style="left:936.8px;top:118.5px;color:#d6d6d6;font-size:6.45px">Background</div>
<div class="t" style="left:955px;top:133.2px;color:#d8d8d8">単色塗りつぶし 1</div>
<!-- bottom bar -->
<div class="a" style="left:902px;top:417.8px;width:122px;height:12.2px;background:#434343;border-top:.6px solid #3e3e3e"></div>
<!-- RICONS START -->
<svg class="a" style="left:0;top:0" width="1024" height="430" viewBox="0 0 1024 430" fill="none">
 <!-- collapse arrows -->
 <path d="M890.2 46.3 L888.6 47.6 L890.2 48.9Z M892 46.3 L893.6 47.6 L892 48.9Z" fill="#bdbdbd"/>
 <path d="M961.6 46.3 L963.4 47.6 L961.6 48.9Z M967.4 46.3 L965.6 47.6 L967.4 48.9Z" fill="#bdbdbd"/>
 <!-- info -->
 <circle cx="891" cy="58" r="4.5" stroke="#dadada" stroke-width=".9"/>
 <path d="M891 57.2 V60.4" stroke="#dadada" stroke-width="1"/><circle cx="891" cy="55.7" r=".6" fill="#dadada"/>
 <!-- properties -->
 <path d="M886 70 H896 M886 73 H896 M886 76.2 H896" stroke="#dadada" stroke-width="1"/>
 <path d="M889 69 V71 M893.4 72 V74 M890.4 75.2 V77.2" stroke="#474747" stroke-width=".9"/>
 <!-- brush panel -->
 <path d="M895 87.4 L896.2 88.6 L892.6 93 L891 91.4Z" fill="#dadada"/>
 <path d="M890.4 92 L892 93.6 C892 95.8 890 97.2 886.8 97 C888 96 887.6 95 888.2 93.8 C888.8 92.8 889.6 92.2 890.4 92Z" fill="#dadada"/>
 <path d="M886.4 88 H889.6 M886.4 89.4 H889.6 M887.2 87.2 V90.2 M888.8 87.2 V90.2" stroke="#b0b0b0" stroke-width=".5"/>
 <!-- Tt -->
 <text transform="translate(886.2 115.3) scale(.74 1)" font-family="Liberation Serif, serif" font-size="13.6" fill="#d2d2d2">Tt</text>
 <!-- pilcrow -->
 <text transform="translate(886.4 129.6) scale(1.45 1)" font-family="Liberation Serif, serif" font-size="12" font-weight="bold" fill="#dadada">¶</text>
 <!-- CSS -->
 <text x="891" y="146.3" text-anchor="middle" font-family="Liberation Sans, sans-serif" font-weight="bold" font-size="5.4" fill="#dadada">CSS</text>
 <!-- ruler tool icon -->
 <rect x="887.6" y="154.6" width="3" height="9.2" stroke="#dadada" stroke-width=".6"/>
 <path d="M887.6 156.8 h1.3 M887.6 159.2 h1.3 M887.6 161.6 h1.3" stroke="#dadada" stroke-width=".4"/>
 <path d="M893.6 155.4 V163 M893.6 154.4 L894.9 156.4 H892.3Z M893.6 164 L894.9 162 H892.3Z" stroke="#dadada" stroke-width=".7" fill="#dadada"/>
 <!-- Mem -->
 <text x="885.8" y="175" font-family="Liberation Sans, sans-serif" font-size="6.7" fill="#e6e6e6">Mem</text>
 <!-- image icon -->
 <rect x="886.6" y="183.2" width="9.2" height="7.2" stroke="#dadada" stroke-width=".8"/>
 <path d="M887 190 L889.6 186.6 L891.4 188.4 L893 187 L895.4 190Z" fill="#dadada"/><circle cx="893.6" cy="185.4" r=".8" fill="#dadada"/>

 <!-- panel menu icon -->
 <path d="M1020.4 54 H1024 M1020.4 55.6 H1024 M1020.4 57.2 H1024" stroke="#9a9a9a" stroke-width=".6"/>

 <!-- lock icons -->
 <rect x="957" y="91" width="7" height="7" fill="#e4e4e4"/>
 <path d="M957 91 h1.75 v1.75 h-1.75Z M960.5 91 h1.75 v1.75 h-1.75Z M958.75 92.75 h1.75 v1.75 h-1.75Z M962.25 92.75 h1.75 v1.75 h-1.75Z M957 94.5 h1.75 v1.75 h-1.75Z M960.5 94.5 h1.75 v1.75 h-1.75Z M958.75 96.25 h1.75 v1.75 h-1.75Z M962.25 96.25 h1.75 v1.75 h-1.75Z" fill="#555"/>
 <path d="M972 90.6 L973 91.6 L970 95 L968.8 93.8Z" fill="#dadada"/>
 <path d="M968.4 94.2 L969.6 95.4 C969.6 97.2 968 98.3 965.6 98.1 C966.6 97.3 966.3 96.5 966.8 95.6 C967.2 94.8 967.8 94.4 968.4 94.2Z" fill="#dadada"/>
 <path d="M978.2 91.6 V97.6 M975.2 94.6 H981.2" stroke="#dadada" stroke-width=".8"/>
 <path d="M978.2 90.4 L979.4 92 H977Z M978.2 98.8 L979.4 97.2 H977Z M974 94.6 L975.6 93.4 V95.8Z M982.4 94.6 L980.8 93.4 V95.8Z" fill="#dadada"/>
 <rect x="984" y="94" width="6.6" height="4.4" rx=".5" fill="#dadada"/>
 <path d="M985.4 94 V92.6 a1.9 1.9 0 0 1 3.8 0 V94" stroke="#dadada" stroke-width=".9"/>

 <!-- eyes -->
 <g stroke="#dadada" stroke-width=".7">
  <path d="M905 122.6 C906.6 120.4 910.4 120.4 912 122.6 C910.4 124.8 906.6 124.8 905 122.6Z"/>
  <circle cx="908.5" cy="122.6" r="1.1"/>
  <path d="M905 137.4 C906.6 135.2 910.4 135.2 912 137.4 C910.4 139.6 906.6 139.6 905 137.4Z"/>
  <circle cx="908.5" cy="137.4" r="1.1"/>
 </g>
 <!-- layer 1 thumb -->
 <defs><pattern id="chk" width="1.6" height="1.6" patternUnits="userSpaceOnUse"><rect width="1.6" height="1.6" fill="#fff"/><rect width=".8" height=".8" fill="#dcdcdc"/><rect x=".8" y=".8" width=".8" height=".8" fill="#dcdcdc"/></pattern></defs>
 <rect x="916.7" y="116.5" width="15.6" height="10.6" fill="url(#chk)"/>
 <path d="M923.6 127.1 L923.9 122.6 L924.4 121.4 L925.3 121.4 L925.9 122.6 L926.3 127.1Z" fill="#e4e2f6"/>
 <circle cx="924.8" cy="119.8" r=".9" fill="#e8dcd4"/>
 <!-- layer 2 thumb -->
 <rect x="915.3" y="130.4" width="13.8" height="13.6" fill="#fff"/>
 <rect x="915.3" y="130.4" width="13.8" height="13.6" stroke="#222" stroke-width="1.2" stroke-dasharray="1.6 1.6"/>
 <rect x="916.5" y="131.5" width="11.4" height="11.4" fill="#fff"/>
 <rect x="916.7" y="131.6" width="10.8" height="8.6" fill="#6a2b03"/>
 <!-- link -->
 <rect x="929.8" y="133.4" width="2.6" height="3" rx=".9" stroke="#e0e0e0" stroke-width=".7"/>
 <rect x="929.8" y="137.6" width="2.6" height="3" rx=".9" stroke="#e0e0e0" stroke-width=".7"/>
 <path d="M931.1 135.4 V138.6" stroke="#e0e0e0" stroke-width=".7"/>
 <!-- mask thumb -->
 <rect x="934.5" y="131" width="16" height="11.4" fill="#555" stroke="#414141" stroke-width=".7"/>

 <!-- bottom icons -->
 <g stroke="#dadada" fill="none" stroke-width=".9">
  <rect x="946" y="424.2" width="3.4" height="3.2" rx="1.5"/><rect x="949.8" y="424.2" width="3.4" height="3.2" rx="1.5"/>
 </g>
 <path d="M948.4 425.8 H951" stroke="#dadada" stroke-width=".8"/>
 <text x="957" y="428.4" font-family="Liberation Serif, serif" font-style="italic" font-size="7.6" fill="#b4b4b4" style="font-variant-ligatures:none;font-feature-settings:&quot;liga&quot; 0" textLength="8.2" lengthAdjust="spacingAndGlyphs">eff</text>
 <circle cx="972.4" cy="425.8" r="3.3" stroke="#dadada" stroke-width=".8"/><path d="M972.4 422.5 A3.3 3.3 0 0 0 972.4 429.1Z" fill="#dadada"/>
 <rect x="981" y="422.8" width="7.2" height="5.8" fill="#dadada"/><circle cx="984.6" cy="425.7" r="1.7" fill="#434343"/>
 <path d="M992.6 423 H995.4 L996.2 424 H1000 V428.8 H992.6Z" fill="#dadada"/>
 <path d="M1004.4 422.6 H1011.4 V429 H1007 L1004.4 426.6Z" stroke="#dadada" stroke-width=".8"/><path d="M1004.4 426.6 H1007 V429" stroke="#dadada" stroke-width=".7"/>
 <path d="M1016.4 423.4 H1023 L1022.2 429.4 H1017.2Z" fill="#dadada"/><path d="M1015.8 422.8 H1023.6" stroke="#dadada" stroke-width=".8"/>

 <!-- top bar icons: search, fullscreen -->
 <circle cx="297.2" cy="21.6" r="2.7" stroke="#f0f0f0" stroke-width="1"/><path d="M299.3 23.8 L302.4 26.8" stroke="#f0f0f0" stroke-width="1.4" stroke-linecap="round"/>
 <path d="M309.9 21.3 V19.3 H312 M314.6 19.3 H316.7 V21.3 M316.7 24.3 V26.3 H314.6 M312 26.3 H309.9 V24.3" stroke="#f0f0f0" stroke-width="1"/>
 <!-- social icons -->
 <g fill="#d8d8d8">
  <ellipse cx="989" cy="23.6" rx="4.4" ry="3.1"/><circle cx="985" cy="21.4" r="1.1"/><circle cx="993" cy="21.4" r="1.1"/><circle cx="992.4" cy="18.2" r=".9"/>
  <path d="M989 20.6 L989.8 18 L992.4 18.4" stroke="#d8d8d8" stroke-width=".6" fill="none"/>
  <path d="M1010.2 19.2 C1009.8 19.4 1009.4 19.5 1009 19.6 C1009.4 19.3 1009.8 18.9 1009.9 18.4 C1009.5 18.6 1009 18.8 1008.6 18.9 C1007.4 17.6 1005.2 18.6 1005.4 20.5 C1003.6 20.4 1002 19.6 1000.9 18.3 C1000.3 19.3 1000.6 20.6 1001.6 21.2 C1001.3 21.2 1000.9 21.1 1000.6 20.9 C1000.6 21.9 1001.4 22.8 1002.4 23 C1002.1 23.1 1001.7 23.1 1001.4 23 C1001.7 23.9 1002.5 24.5 1003.4 24.5 C1002.5 25.2 1001.4 25.6 1000.2 25.4 C1003.6 27.6 1009.2 26 1009.2 20.4 C1009.6 20.1 1010 19.7 1010.2 19.2Z"/>
  <path d="M1024 19.6 A4.9 4.9 0 1 0 1020 27.1 V23.7 H1018.7 V22.2 H1020 V21.1 C1020 19.8 1020.8 19.1 1022 19.1 C1022.5 19.1 1023.1 19.2 1023.1 19.2 V20.5 H1022.4 C1021.8 20.5 1021.6 20.9 1021.6 21.3 V22.2 H1023 L1022.8 23.7 H1021.6 V27.2 A4.9 4.9 0 0 0 1024 25Z"/>
 </g>
 <circle cx="987.4" cy="23.2" r=".7" fill="#474747"/><circle cx="990.6" cy="23.2" r=".7" fill="#474747"/>
</svg>
<!-- RICONS END -->
</div>
</body>
</html>
